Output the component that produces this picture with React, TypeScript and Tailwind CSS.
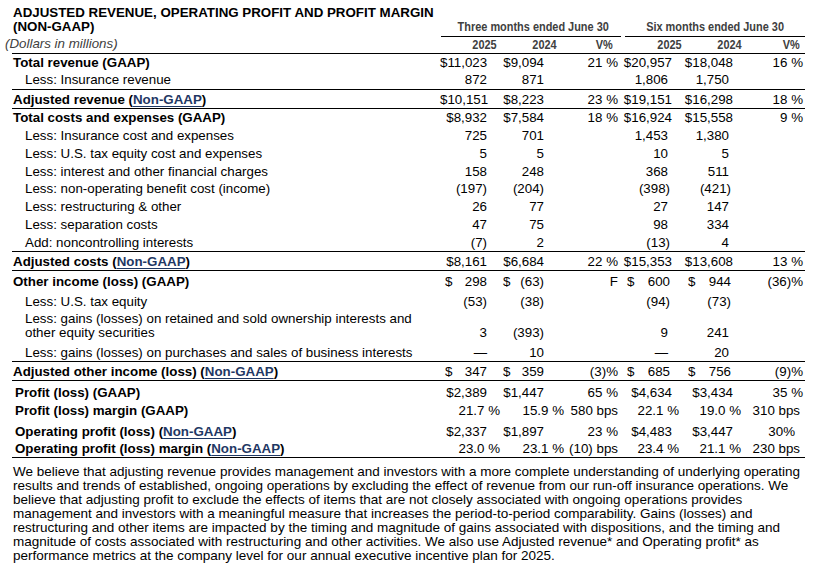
import React from 'react';

const NG = () => (
  <span className="text-[#1f3864] underline decoration-[#1f3864] decoration-1 underline-offset-[2px]">Non-GAAP</span>
);

type Row = {
  label: React.ReactNode;
  vals: string[];
  h: string;
  lcls?: string;
  vcls?: string[];
  wrap?: boolean;
};

const dollarPad = ['pl-[5px]', 'pl-[16px]', '', 'pl-[9px]', 'pl-[16px]', ''];

const B = 'font-bold';
const IND = 'pl-[13px]';

const rows: Row[] = [
  { label: 'Total revenue (GAAP)', lcls: B, h: 'h-[17px]', vals: ['$11,023', '$9,094', '21 %', '$20,957', '$18,048', '16 %'] },
  { label: 'Less: Insurance revenue', lcls: IND, h: 'h-[19px] pb-[2px] border-b border-black', vals: ['872', '871', '', '1,806', '1,750', ''] },
  { label: <>Adjusted revenue (<NG />)</>, lcls: B, h: 'h-[19px] border-b border-black', vals: ['$10,151', '$8,223', '23 %', '$19,151', '$16,298', '18 %'] },
  { label: 'Total costs and expenses (GAAP)', lcls: B, h: 'h-[17.75px]', vals: ['$8,932', '$7,584', '18 %', '$16,924', '$15,558', '9 %'] },
  { label: 'Less: Insurance cost and expenses', lcls: IND, h: 'h-[17.75px]', vals: ['725', '701', '', '1,453', '1,380', ''] },
  { label: 'Less: U.S. tax equity cost and expenses', lcls: IND, h: 'h-[17.75px]', vals: ['5', '5', '', '10', '5', ''] },
  { label: 'Less: interest and other financial charges', lcls: IND, h: 'h-[17.75px]', vals: ['158', '248', '', '368', '511', ''] },
  { label: 'Less: non-operating benefit cost (income)', lcls: IND, h: 'h-[17.75px]', vals: ['(197)', '(204)', '', '(398)', '(421)', ''] },
  { label: 'Less: restructuring & other', lcls: IND, h: 'h-[17.75px]', vals: ['26', '77', '', '27', '147', ''] },
  { label: 'Less: separation costs', lcls: IND, h: 'h-[17.75px]', vals: ['47', '75', '', '98', '334', ''] },
  { label: 'Add: noncontrolling interests', lcls: IND, h: 'h-[18.75px] border-b border-black', vals: ['(7)', '2', '', '(13)', '4', ''] },
  { label: <>Adjusted costs (<NG />)</>, lcls: B, h: 'h-[19px] border-b border-black', vals: ['$8,161', '$6,684', '22 %', '$15,353', '$13,608', '13 %'] },
  { label: 'Other income (loss) (GAAP)', lcls: B, h: 'h-[21px]', vals: ['$ 298', '$ (63)', 'F', '$ 600', '$ 944', '(36)%'] },
  { label: 'Less: U.S. tax equity', lcls: IND, h: 'h-[18px]', vals: ['(53)', '(38)', '', '(94)', '(73)', ''] },
  { label: <>Less: gains (losses) on retained and sold ownership interests and<br />other equity securities</>, lcls: IND, h: 'h-[33px] pb-[3px]', wrap: true, vals: ['3', '(393)', '', '9', '241', ''] },
  { label: 'Less: gains (losses) on purchases and sales of business interests', lcls: IND, h: 'h-[19px] border-b border-black', vals: ['\u2014', '10', '', '\u2014', '20', ''] },
  { label: <>Adjusted other income (loss) (<NG />)</>, lcls: B, h: 'h-[19px] border-b border-black', vals: ['$ 347', '$ 359', '(3)%', '$ 685', '$ 756', '(9)%'] },
  { label: 'Profit (loss) (GAAP)', lcls: B + ' pl-[3px]', h: 'h-[20px] pt-[2px]', vals: ['$2,389', '$1,447', '65 %', '$4,634', '$3,434', '35 %'] },
  { label: 'Profit (loss) margin (GAAP)', lcls: B + ' pl-[3px]', h: 'h-[18px]', vals: ['21.7 %', '15.9 %', '580 bps', '22.1 %', '19.0 %', '310 bps'], vcls: ['-mr-[13px]', '-mr-[20px]', '', '-mr-[11px]', '-mr-[12px]', 'pr-[3px]'] },
  { label: <>Operating profit (loss) (<NG />)</>, lcls: B + ' pl-[3px]', h: 'h-[21px] pt-[3px]', vals: ['$2,337', '$1,897', '23 %', '$4,483', '$3,447', '30%'], vcls: ['', '', '', '', '', 'pr-[8px]'] },
  { label: <>Operating profit (loss) margin (<NG />)</>, lcls: B + ' pl-[3px]', h: 'h-[18px] border-b border-black', vals: ['23.0 %', '23.1 %', '(10) bps', '23.4 %', '21.1 %', '230 bps'], vcls: ['-mr-[13px]', '-mr-[20px]', '', '-mr-[11px]', '-mr-[12px]', 'pr-[3px]'] },
];

function Val({ v, i, extra }: { v: string; i: number; extra?: string }) {
  if (v.startsWith('$ ')) {
    return (
      <div className={`flex justify-between whitespace-nowrap ${dollarPad[i]} ${i >= 3 ? 'pr-[2px]' : ''} ${extra ?? ''}`}>
        <span>$</span>
        <span>{v.slice(2)}</span>
      </div>
    );
  }
  let pad = '';
  if ((i === 3 || i === 4) && !v.startsWith('$')) pad = v.endsWith(')') ? 'pr-[2px]' : 'pr-[4px]';
  return <div className={`text-right whitespace-nowrap ${pad} ${extra ?? ''}`}>{v}</div>;
}

const footLines = [
  'We believe that adjusting revenue provides management and investors with a more complete understanding of underlying operating',
  'results and trends of established, ongoing operations by excluding the effect of revenue from our run-off insurance operations. We',
  'believe that adjusting profit to exclude the effects of items that are not closely associated with ongoing operations provides',
  'management and investors with a meaningful measure that increases the period-to-period comparability. Gains (losses) and',
  'restructuring and other items are impacted by the timing and magnitude of gains associated with dispositions, and the timing and',
  'magnitude of costs associated with restructuring and other activities. We also use Adjusted revenue* and Operating profit* as',
  'performance metrics at the company level for our annual executive incentive plan for 2025.',
];

export default function App() {
  return (
    <div className="w-[821px] h-[573px] bg-white overflow-hidden font-['Liberation_Sans',Arial,sans-serif] text-[13.33px] text-black">
      <div className="ml-[12px] w-[793px]">
        {/* Header */}
        <div className="flex h-[54px] border-b border-black">
          <div className="w-[428px] pt-[6px] pl-[1px]">
            <div className="font-bold leading-[14px] whitespace-nowrap">
              ADJUSTED REVENUE, OPERATING PROFIT AND PROFIT MARGIN
              <br />
              (NON-GAAP)
            </div>
            <div className="mt-[3px] -ml-[8px] italic leading-[14px] text-[#404040] whitespace-nowrap">(Dollars in millions)</div>
          </div>
          <div className="w-[365px]">
            <div className="flex mt-[20px]">
              <div className="ml-[1px] w-[180px] h-[17px] border-b border-black text-center leading-[14px] font-bold text-[#404040] whitespace-nowrap">
                <span className="inline-block scale-x-[0.82]">Three months ended June 30</span>
              </div>
              <div className="ml-[4px] w-[180px] h-[17px] border-b border-black text-center leading-[14px] font-bold text-[#404040] whitespace-nowrap">
                <span className="inline-block scale-x-[0.82]">Six months ended June 30</span>
              </div>
            </div>
            <div className="mt-[1px] grid grid-cols-[57px_60px_56px_69px_60px_58px] leading-[14px] font-bold text-[#404040]">
              {['2025', '2024', 'V%', '2025', '2024', 'V%'].map((y, i) => (
                <div key={i} className="text-right">
                  <span className="inline-block origin-right scale-x-[0.82]">{y}</span>
                </div>
              ))}
            </div>
          </div>
        </div>

        {/* Body */}
        {rows.map((r, ri) => (
          <div
            key={ri}
            className={`grid grid-cols-[428px_47px_57px_74px_54px_61px_70px] ${r.wrap ? 'items-end' : 'items-center'} ${r.h}`}
          >
            <div className={`pl-[1px] whitespace-nowrap ${r.wrap ? 'leading-[14px]' : 'leading-[15px]'} ${r.lcls ?? ''}`}>{r.label}</div>
            {r.vals.map((v, i) => (
              <div key={i} className={r.wrap ? 'leading-[14px]' : 'leading-[15px]'}>
                <Val v={v} i={i} extra={r.vcls?.[i]} />
              </div>
            ))}
          </div>
        ))}

        {/* Footnote */}
        <div className="pt-[7px] pl-[1px] leading-[14px] text-[13.5px]">
          {footLines.map((l, i) => (
            <div key={i} className="whitespace-nowrap">{l}</div>
          ))}
        </div>
      </div>
    </div>
  );
}
